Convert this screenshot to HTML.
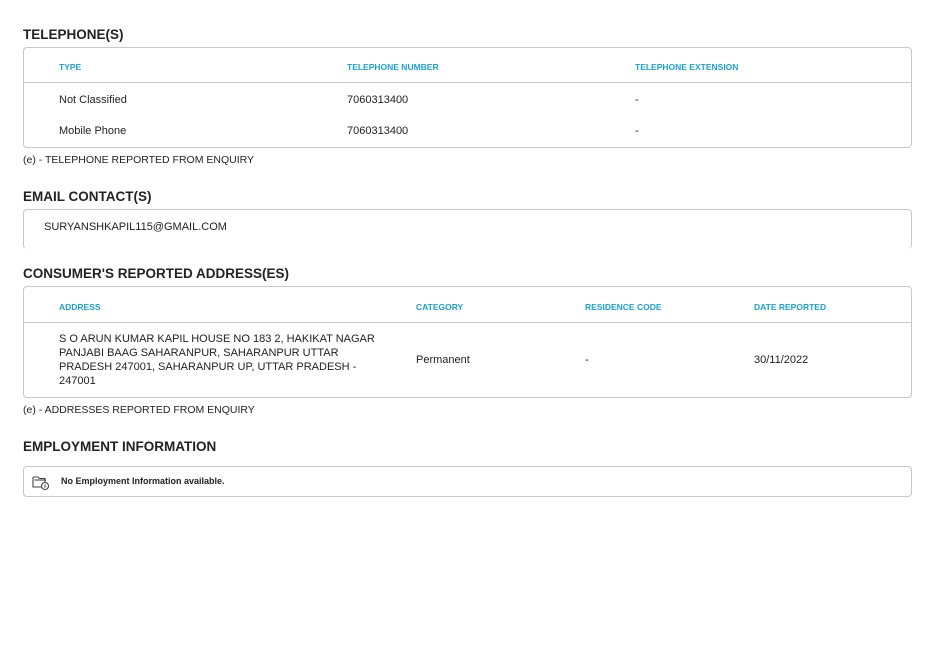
<!DOCTYPE html>
<html><head><style>
body{margin:0;background:#fff;font-family:"Liberation Sans",sans-serif;color:#222;}
.h{position:absolute;left:23px;font-size:13.5px;font-weight:bold;color:#222}
.box{position:absolute;left:23px;width:889px;border:1px solid #c8c8c8;border-radius:4px;box-sizing:border-box}
.t{position:absolute;font-size:11px;white-space:nowrap}
.th{position:absolute;font-size:8.5px;font-weight:bold;color:#1aa3d1;white-space:nowrap}
.line{position:absolute;left:0;right:0;border-top:1px solid #c8c8c8}
.n{position:absolute;left:23px;font-size:10.5px}
</style></head><body>
<div class="h" style="top:27px">TELEPHONE(S)</div>
<div class="box" style="top:47px;height:101px">
 <div class="th" style="left:35px;top:14px">TYPE</div>
 <div class="th" style="left:323px;top:14px">TELEPHONE NUMBER</div>
 <div class="th" style="left:611px;top:14px">TELEPHONE EXTENSION</div>
 <div class="line" style="top:34px"></div>
 <div class="t" style="left:35px;top:46px">Not Classified</div>
 <div class="t" style="left:323px;top:46px">7060313400</div>
 <div class="t" style="left:611px;top:46px">-</div>
 <div class="t" style="left:35px;top:77px">Mobile Phone</div>
 <div class="t" style="left:323px;top:77px">7060313400</div>
 <div class="t" style="left:611px;top:77px">-</div>
</div>
<div class="n" style="top:154px">(e) - TELEPHONE REPORTED FROM ENQUIRY</div>
<div class="h" style="top:189px">EMAIL CONTACT(S)</div>
<div class="box" style="top:209px;height:40px;border-bottom:none">
 <div class="t" style="left:20px;top:11px">SURYANSHKAPIL115@GMAIL.COM</div>
</div>
<div class="h" style="top:266px">CONSUMER'S REPORTED ADDRESS(ES)</div>
<div class="box" style="top:286px;height:112px">
 <div class="th" style="left:35px;top:15px">ADDRESS</div>
 <div class="th" style="left:392px;top:15px">CATEGORY</div>
 <div class="th" style="left:561px;top:15px">RESIDENCE CODE</div>
 <div class="th" style="left:730px;top:15px">DATE REPORTED</div>
 <div class="line" style="top:35px"></div>
 <div class="t" style="left:35px;top:45px;white-space:normal;width:325px;line-height:14px">S O ARUN KUMAR KAPIL HOUSE NO 183 2, HAKIKAT NAGAR PANJABI BAAG SAHARANPUR, SAHARANPUR UTTAR PRADESH 247001, SAHARANPUR UP, UTTAR PRADESH - 247001</div>
 <div class="t" style="left:392px;top:67px">Permanent</div>
 <div class="t" style="left:561px;top:67px">-</div>
 <div class="t" style="left:730px;top:67px">30/11/2022</div>
</div>
<div class="n" style="top:404px">(e) - ADDRESSES REPORTED FROM ENQUIRY</div>
<div class="h" style="top:439px">EMPLOYMENT INFORMATION</div>
<div class="box" style="top:466px;height:31px">
 <svg style="position:absolute;left:8px;top:7px" width="18" height="17" viewBox="0 0 18 17" fill="none" stroke="#444" stroke-width="1.1"><path d="M1 3V13H10M1 3H6L7.5 4.5H13V8"/><path d="M2.5 6H14"/><circle cx="13" cy="12" r="3.5"/><path d="M13 10.5V13.5"/></svg>
 <div class="t" style="left:37px;top:9px;font-size:9px;font-weight:bold">No Employment Information available.</div>
</div>
</body></html>
